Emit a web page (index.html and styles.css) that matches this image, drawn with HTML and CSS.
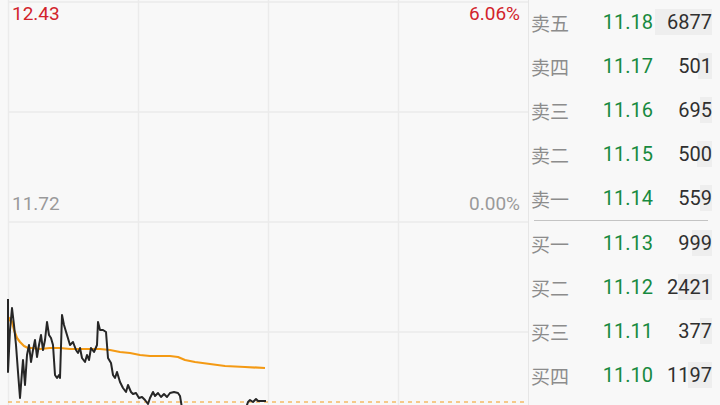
FILE: index.html
```html
<!DOCTYPE html>
<html lang="zh-CN">
  <head>
    <meta charset="UTF-8" />
    <title>分时盘口</title>
    <link rel="stylesheet" href="styles.css">
  </head>
  <body>
    <div class="chart">
      <svg class="plot" width="528" height="405" viewBox="0 0 528 405">
        <!-- grid -->
        <g class="grid">
          <line x1="8" y1="2" x2="528" y2="2" />
          <line x1="8" y1="112" x2="528" y2="112" />
          <line x1="8" y1="222" x2="528" y2="222" />
          <line x1="8" y1="332" x2="528" y2="332" />
          <line x1="8.5" y1="0" x2="8.5" y2="405" />
          <line x1="138.5" y1="0" x2="138.5" y2="405" />
          <line x1="268.5" y1="0" x2="268.5" y2="405" />
          <line x1="398.5" y1="0" x2="398.5" y2="405" />
        </g>
        <!-- prev close -->
        <line class="close" x1="8" y1="402" x2="528" y2="402" />
        <!-- average price -->
        <polyline class="avg" points="8,322 10,318 12,322 14,330 17,338 20,342 24,346 28,348 32,348 40,349 50,348 60,348 70,349 80,349 90,349 100,349 110,350 120,352 130,353 140,355 150,356 160,356 170,356 178,357 185,360 195,362 210,364 225,366 245,367 265,368" />
        <!-- price -->
        <polyline class="price" points="8,299 8,372 10,330 12,308 14,325 16,345 18,372 20,398 22,372 23,360 25,385 27,355 29,345 31,362 33,350 35,340 37,357 39,345 41,335 43,350 45,340 47,322 49,335 51,338 53,345 55,375 57,378 59,375 60,378 62,315 64,325 67,335 70,345 73,342 76,350 78,353 80,348 82,358 85,362 87,355 89,360 91,348 94,352 97,345 98,322 100,330 103,330 106,332 108,358 111,363 113,375 115,378 117,372 120,382 123,388 126,392 128,385 131,392 133,394 136,393 139,398 142,397 145,400 148,404 150,398 153,392 155,396 158,393 161,397 164,394 167,397 170,393 174,392 178,393 180,396 182,408" />
        <polyline class="price" points="246,408 248,402 250,400 253,402 256,399 258,401 266,401" />
      </svg>
      <span class="tag tag-top-left up">12.43</span>
      <span class="tag tag-top-right up">6.06%</span>
      <span class="tag tag-mid-left">11.72</span>
      <span class="tag tag-mid-right">0.00%</span>
    </div>

    <div class="book">
      <div class="side">
        <div class="row"><span class="lbl">卖五</span><span class="px">11.18</span><span class="vol"><i class="bar" style="width:57px"></i><b>6877</b></span></div>
        <div class="row"><span class="lbl">卖四</span><span class="px">11.17</span><span class="vol"><i class="bar" style="width:14px"></i><b>501</b></span></div>
        <div class="row"><span class="lbl">卖三</span><span class="px">11.16</span><span class="vol"><i class="bar" style="width:12px"></i><b>695</b></span></div>
        <div class="row"><span class="lbl">卖二</span><span class="px">11.15</span><span class="vol"><i class="bar" style="width:15px"></i><b>500</b></span></div>
        <div class="row"><span class="lbl">卖一</span><span class="px">11.14</span><span class="vol"><i class="bar" style="width:12px"></i><b>559</b></span></div>
      </div>
      <div class="side buy">
        <div class="row"><span class="lbl">买一</span><span class="px">11.13</span><span class="vol"><i class="bar" style="width:20px"></i><b>999</b></span></div>
        <div class="row"><span class="lbl">买二</span><span class="px">11.12</span><span class="vol"><i class="bar" style="width:34px"></i><b>2421</b></span></div>
        <div class="row"><span class="lbl">买三</span><span class="px">11.11</span><span class="vol"><i class="bar" style="width:12px"></i><b>377</b></span></div>
        <div class="row"><span class="lbl">买四</span><span class="px">11.10</span><span class="vol"><i class="bar" style="width:24px"></i><b>1197</b></span></div>
      </div>
    </div>
  </body>
</html>
```

FILE: styles.css
```css
html,
body {
  margin: 0;
  height: 100%;
}

body {
  background: #f8f8f8;
  display: flex;
  overflow: hidden;
  font-family: Roboto, "Noto Sans CJK SC", sans-serif;
}

.chart {
  position: relative;
  width: 528px;
  height: 405px;
  flex: none;
}

.plot {
  display: block;
}

.grid line {
  stroke: #ebebeb;
  stroke-width: 1.5;
}

.close {
  stroke: #f39a1c;
  stroke-width: 1.2;
  stroke-dasharray: 4 4;
}

.avg {
  fill: none;
  stroke: #f49a14;
  stroke-width: 2.2;
  stroke-linejoin: round;
}

.price {
  fill: none;
  stroke: #262626;
  stroke-width: 2;
  stroke-linejoin: round;
}

.tag {
  position: absolute;
  font-size: 19px;
  line-height: 22px;
  color: #9a9a9a;
}

.tag.up {
  color: #d2232b;
}

.tag-top-left {
  top: 3px;
  left: 12px;
}

.tag-top-right {
  top: 3px;
  right: 8px;
}

.tag-mid-left {
  top: 193px;
  left: 12px;
}

.tag-mid-right {
  top: 193px;
  right: 8px;
}

.book {
  flex: 1;
  border-left: 1.5px solid #e6e6e6;
  padding: 0 8px 0 2px;
}

.side.buy {
  border-top: 1px solid #c4c4c4;
  margin: 0 4px 0 3px;
}

.side.buy .row {
  margin: 0 -4px 0 -3px;
}

.row {
  display: grid;
  grid-template-columns: 57px 65px 1fr;
  align-items: center;
  height: 44px;
}

.lbl {
  font-family: "Noto Sans CJK SC", sans-serif;
  font-size: 19px;
  color: #8c8c8c;
}

.px {
  text-align: right;
  font-size: 20px;
  color: #178a40;
}

.vol {
  position: relative;
  text-align: right;
  font-size: 20px;
  color: #303030;
}

.vol b {
  position: relative;
  font-weight: normal;
}

.bar {
  position: absolute;
  right: 0;
  top: -1px;
  bottom: -1px;
  background: #eeeeee;
}
```
